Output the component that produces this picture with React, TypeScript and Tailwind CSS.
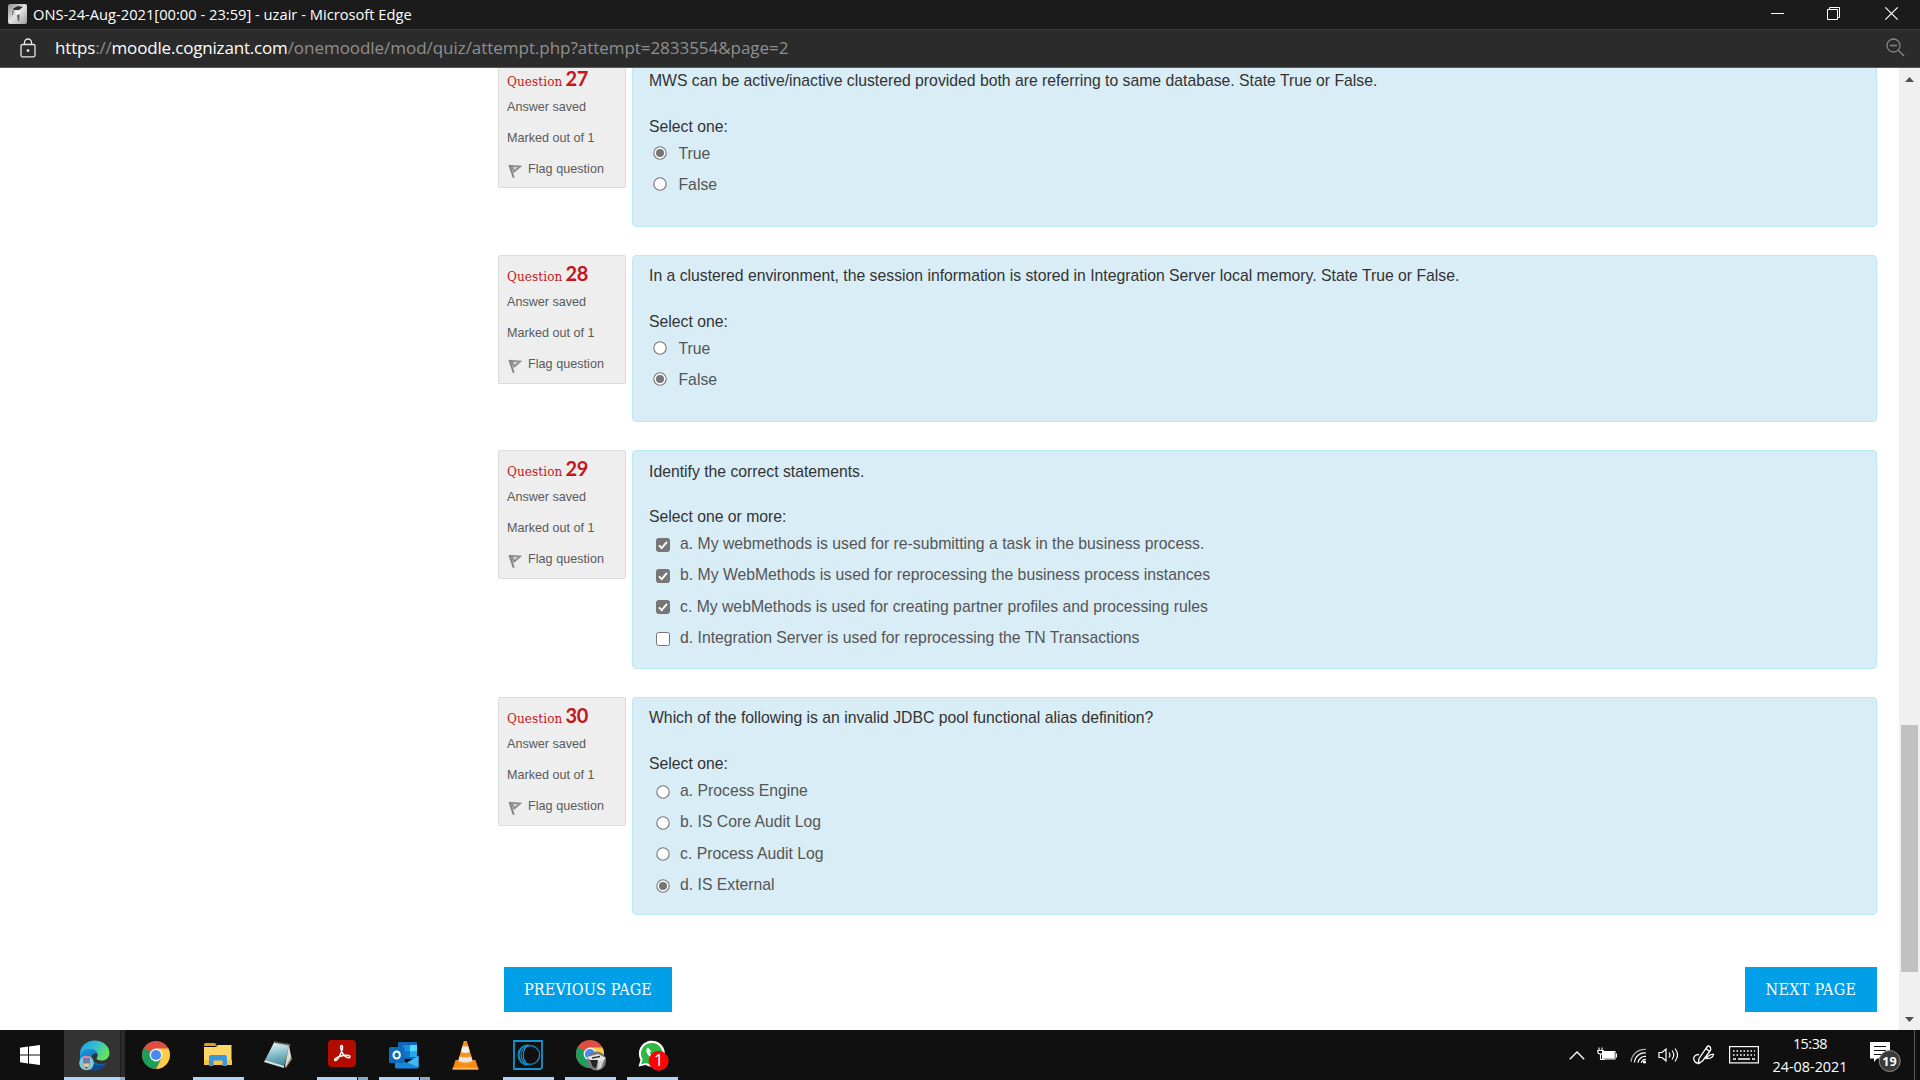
import React from 'react';

type Kind = 'bool' | 'radio' | 'check';

interface Quiz {
  n: number;
  text: string;
  prompt: string;
  kind: Kind;
  height: string;
  infoHeight: string;
  options: { label: string; on?: boolean }[];
}

const questions: Quiz[] = [
  {
    n: 27,
    text: 'MWS can be active/inactive clustered provided both are referring to same database. State True or False.',
    prompt: 'Select one:',
    kind: 'bool',
    height: 'h-[167px]',
    infoHeight: 'h-[128px]',
    options: [{ label: 'True', on: true }, { label: 'False' }],
  },
  {
    n: 28,
    text: 'In a clustered environment, the session information is stored in Integration Server local memory. State True or False.',
    prompt: 'Select one:',
    kind: 'bool',
    height: 'h-[167px]',
    infoHeight: 'h-[129px]',
    options: [{ label: 'True' }, { label: 'False', on: true }],
  },
  {
    n: 29,
    text: 'Identify the correct statements.',
    prompt: 'Select one or more:',
    kind: 'check',
    height: 'h-[219px]',
    infoHeight: 'h-[129px]',
    options: [
      { label: 'a. My webmethods is used for re-submitting a task in the business process.', on: true },
      { label: 'b. My WebMethods is used for reprocessing the business process instances', on: true },
      { label: 'c. My webMethods is used for creating partner profiles and processing rules', on: true },
      { label: 'd. Integration Server is used for reprocessing the TN Transactions' },
    ],
  },
  {
    n: 30,
    text: 'Which of the following is an invalid JDBC pool functional alias definition?',
    prompt: 'Select one:',
    kind: 'radio',
    height: 'h-[218px]',
    infoHeight: 'h-[129px]',
    options: [
      { label: 'a. Process Engine' },
      { label: 'b. IS Core Audit Log' },
      { label: 'c. Process Audit Log' },
      { label: 'd. IS External', on: true },
    ],
  },
];

function Radio({ on }: { on?: boolean }) {
  return (
    <svg width="14" height="14" viewBox="0 0 14 14" className="block shrink-0">
      <circle cx="7" cy="7" r="6.2" fill="#fff" stroke="#767676" strokeWidth="1.1" />
      {on && <circle cx="7" cy="7" r="4" fill="#767676" />}
    </svg>
  );
}

function Check({ on }: { on?: boolean }) {
  return (
    <svg width="14" height="14" viewBox="0 0 14 14" className="block shrink-0">
      <rect x="0.5" y="0.5" width="13" height="13" rx="2" fill={on ? '#767676' : '#fff'} stroke="#767676" />
      {on && <path d="M3 7.4 5.7 10.1 11 3.8" fill="none" stroke="#fff" strokeWidth="2" />}
    </svg>
  );
}

function Flag() {
  return (
    <svg width="14" height="15" viewBox="0 0 14 15" className="mt-[4px] block">
      <path d="M0.4 1.2 2.6 0.8 6.6 13.4 4.8 14Z" fill="#858585" />
      <path d="M3.4 1.8 12.2 2.4 6.2 7.6Z" fill="#d0d0d0" stroke="#8a8a8a" strokeWidth="1.6" />
    </svg>
  );
}

function InfoBox({ n, height }: { n: number; height: string }) {
  return (
    <div className={`${height} w-32 shrink-0 rounded-[2px] border border-[#dcdcdc] bg-[#eee] pl-2 text-[12.6px] text-[#5a5a5a]`}>
      <div className="flex h-[30.6px] items-baseline gap-[3px] pt-[5px] text-[#c4161c]">
        <span className="font-['DejaVu_Serif_Condensed','DejaVu_Serif',serif] text-[13.4px] leading-6 tracking-[0.1px]">Question</span>
        <span className="font-[Lato,sans-serif] text-[20px] font-bold leading-6 tracking-[-0.4px]">{n}</span>
      </div>
      <div className="h-[31px] leading-[31px]">Answer saved</div>
      <div className="h-[31px] leading-[31px]">Marked out of 1</div>
      <div className="flex h-[31px] items-center gap-[6px] pl-[1px] leading-[31px]">
        <Flag />
        <span className="tracking-[0.03px]">Flag question</span>
      </div>
    </div>
  );
}

function QuestionBlock({ q }: { q: Quiz }) {
  const bool = q.kind === 'bool';
  return (
    <section className="flex items-start gap-[6px]">
      <InfoBox n={q.n} height={q.infoHeight} />
      <div className={`${q.height} flex-1 rounded-[4px] border border-[#bce8f1] bg-[#d9edf7] pl-4 pt-[9px] text-[15.75px] text-[#333]`}>
        <p className={`h-[22px] leading-[22px] ${q.kind === 'check' ? 'mb-[23px] mt-px' : 'mb-[24px]'}`}>{q.text}</p>
        <p className="h-[22px] leading-[22px]">{q.prompt}</p>
        <ul className={bool ? 'pl-[3.5px]' : 'pl-[6.5px]'}>
          {q.options.map((o) => (
            <li key={o.label} className={`flex items-center text-[#555] ${bool ? 'h-[31.2px]' : 'h-[31.4px]'}`}>
              <span className={bool ? 'mr-3 -mt-[2px]' : 'mr-[10.5px] mt-[2px]'}>
                {q.kind === 'check' ? <Check on={o.on} /> : <Radio on={o.on} />}
              </span>
              <span>{o.label}</span>
            </li>
          ))}
        </ul>
      </div>
    </section>
  );
}

function TitleBar() {
  return (
    <header className="flex h-[29px] items-center bg-[#1b1b1b] font-['Open_Sans',sans-serif] text-[14.7px] text-white">
      <svg width="19" height="20" viewBox="0 0 19 20" className="ml-2 mr-[6px] -mt-px">
        <defs>
          <linearGradient id="fav" x1="0" y1="0" x2="1" y2="1">
            <stop offset="0" stopColor="#8d8d8d" />
            <stop offset="0.5" stopColor="#e4e4e4" />
            <stop offset="1" stopColor="#9a9a9a" />
          </linearGradient>
        </defs>
        <rect width="19" height="20" rx="2" fill="url(#fav)" />
        <path d="M5 4.5 10 2 15 3 11 6 6 6Z" fill="#2f2f2f" />
        <path d="M5 6 4.5 11" stroke="#666" strokeWidth="1" />
        <path d="M9 11 11.5 10.500 11.2 17 10 17Z" fill="#5c5c5c" />
        <path d="M7 6.500h5v3.500H8Z" fill="#f2f2f2" />
      </svg>
      <span className="-mt-px">ONS-24-Aug-2021[00:00 - 23:59] - uzair - Microsoft Edge</span>
      <div className="ml-auto flex items-center">
        <svg width="149" height="29" viewBox="0 0 149 29" fill="none" stroke="#fff">
          <path d="M0 13.5h13" />
          <path d="M56.5 9.5h10v10h-10zM58.5 9.5v-2h10v10h-2" />
          <path d="m114.3 7.3 12.4 12.4m0-12.4-12.4 12.4" strokeWidth="1.2" />
        </svg>
      </div>
    </header>
  );
}

function AddressBar() {
  return (
    <div className="flex h-[39px] items-center border-b border-t border-b-[#5c5858] border-t-[#3c3c3c] bg-[#2b2b2b] font-['Open_Sans',sans-serif] text-[17px] text-[#8f8f8f]">
      <svg width="16" height="20" viewBox="0 0 16 20" fill="none" stroke="#e8e8e8" strokeWidth="1.3" className="mb-[2px] ml-[19.5px] mr-[19.5px]">
        <rect x="1" y="6.5" width="14" height="12.3" rx="1.5" />
        <path d="M4.5 6.5V4.5a3.5 3.5 0 0 1 7 0v2" />
        <circle cx="8" cy="12.6" r="0.8" fill="#fff" />
      </svg>
      <p className="mb-px whitespace-nowrap">
        <span className="tracking-[-0.18px] text-white">https</span>
        <span className="tracking-[-0.18px]">://</span>
        <span className="tracking-[-0.18px] text-white">moodle.cognizant.com</span>
        <span className="tracking-[-0.04px]">/onemoodle/mod/quiz/attempt.php?attempt=2833554&amp;page=2</span>
      </p>
      <svg width="19" height="19" viewBox="0 0 19 19" fill="none" stroke="#858585" strokeWidth="1.3" className="mb-[2px] ml-auto mr-[15px]">
        <circle cx="7.5" cy="7.5" r="6.5" />
        <path d="m12.2 12.2 5.8 5.8M4 7.5h7" />
      </svg>
    </div>
  );
}

function Scrollbar() {
  return (
    <div className="flex w-[21px] shrink-0 flex-col items-center bg-[#f0f0f0]">
      <svg width="9" height="5" viewBox="0 0 9 5" className="mt-[9px] block"><path d="M0 5 4.5 0 9 5Z" fill="#505050" /></svg>
      <div className="mt-[643px] h-[247px] w-[17px] bg-[#c1c1c1]" />
      <svg width="9" height="5" viewBox="0 0 9 5" className="mt-[45px] block"><path d="M0 0 4.5 5 9 0Z" fill="#505050" /></svg>
    </div>
  );
}

function ChromeMark() {
  return (
    <g>
      <circle cx="14" cy="14" r="14" fill="#dd4f43" />
      <path d="M14 14 1.9 7A14 14 0 0 0 14 28L20 17.5Z" fill="#1a9f5c" />
      <path d="M14 7.6H26.4A14 14 0 0 1 14 28L19.6 17.2Z" fill="#fdcd48" />
      <circle cx="14" cy="14" r="6.4" fill="#f3f3f3" />
      <circle cx="14" cy="14" r="5.1" fill="#4a8af0" />
    </g>
  );
}

const icons: Record<string, React.ReactNode> = {
  edge: (
    <svg width="31" height="31" viewBox="0 0 31 31">
      <defs>
        <linearGradient id="e1" x1="0" y1="0" x2="1" y2="0.5">
          <stop offset="0" stopColor="#1c9be0" />
          <stop offset="0.55" stopColor="#35c1d0" />
          <stop offset="1" stopColor="#66e35a" />
        </linearGradient>
        <linearGradient id="e2" x1="0" y1="0" x2="0.6" y2="1">
          <stop offset="0" stopColor="#1b9be2" />
          <stop offset="1" stopColor="#0c59a4" />
        </linearGradient>
      </defs>
      <path d="M.8 15.500C2 10.500 6 8.800 10.500 8.800c4 0 7 2.200 8 5-4.500-1-6.500 2-5.500 5 1.200 4 7 6.500 14.500 4.200C24 28.500 20 30.500 15.500 30.500 7 30.500 .5 23.500 .8 15.500Z" fill="url(#e2)" />
      <path d="M1 14C1 6 7.500 .5 15.500 .5 24 .5 30.500 6 30.500 13c0 5-4 7.500-8 7.500-3 0-5-1-5-2 0-.8 1.200-1.500 1.200-3.500 0-3-3-6-7.500-6C6 9 2 11.500 1 16Z" fill="url(#e1)" />
      <path d="M12 17c-1 6 5 10.500 14.500 7.500C24 28.500 19 31 15 30.300 10 28 8 21 12 17Z" fill="#124a8a" />
      <circle cx="7.500" cy="23" r="7.300" fill="#7ccbd6" />
      <path d="M4 17h7v7l-3.500 5L4 24Z" fill="#7d75a8" />
      <path d="M4 23.500h7L7.500 29Z" fill="#f0c58f" />
      <path d="m6.400 27 1.100 2 1.100-2Z" fill="#333" />
      <path d="M4 16h7v2H4Z" fill="#d88ba0" />
    </svg>
  ),
  chrome: <svg width="28" height="28" viewBox="0 0 28 28" className="-mt-px"><ChromeMark /></svg>,
  explorer: (
    <svg width="28" height="24" viewBox="0 0 28 24" className="-mt-px">
      <path d="M0 1.500 1 0H11l2 3H0Z" fill="#e19f0b" />
      <path d="M0 4H12l2-2H27.500V22H0Z" fill="#ffd766" />
      <path d="M0 17H28v5H0Z" fill="#f5c445" />
      <path d="M5 23V14q0-2 2-2H21q2 0 2 2v9H18.500V17.500h-9V23Z" fill="#3b96dc" />
    </svg>
  ),
  notepad: (
    <svg width="29" height="28" viewBox="0 0 29 28" className="-mt-px -ml-[3px]">
      <defs>
        <linearGradient id="np" x1="0.3" y1="0" x2="0.5" y2="1">
          <stop offset="0" stopColor="#e9f4f6" />
          <stop offset="0.45" stopColor="#8fc3cf" />
          <stop offset="1" stopColor="#3f8597" />
        </linearGradient>
      </defs>
      <path d="M24 3 28 18 22 27 21 24Z" fill="#a58a55" />
      <path d="M25 4 27 16 21 27Z" fill="#d9dcdc" />
      <path d="M10 1.500 25 4 20 26 1 19Z" fill="url(#np)" />
      <path d="M1 19 20 25v2L0 21Z" fill="#d9e3e5" />
      <path d="m10 1 16 3" stroke="#777" strokeWidth="2" strokeDasharray="1.500 1" />
    </svg>
  ),
  adobe: (
    <svg width="28" height="27" viewBox="0 0 28 27" className="-mt-[3px]">
      <rect width="28" height="27" rx="4" fill="#b30b00" />
      <path d="M13.500 5.500c1.800 0 1.200 4-1 8.500-1.500 3.500-3.500 6.500-5 6.500-2 0-.5-3 5-4.300 4.500-1.200 9.500-1.300 9.500.6 0 2-4.500.8-7-2.800-2-3-3.200-8.500-1.500-8.500Z" fill="none" stroke="#fff" strokeWidth="1.500" />
    </svg>
  ),
  outlook: (
    <svg width="30" height="27" viewBox="0 0 30 27" className="-ml-px">
      <rect x="9" y="0" width="19" height="17" rx="1" fill="#1066b5" />
      <path d="M14 3h7v6h-7z" fill="#1b90df" /><path d="M21 3h7v6h-7z" fill="#4fd9ff" /><path d="M14 9h7v6h-7z" fill="#1478c8" /><path d="M21 9h7v6h-7z" fill="#28a8ea" />
      <path d="M6 13.500 18 21 29.500 13.500V25q0 1.500-1.500 1.500H7.500Q6 26.500 6 25Z" fill="#1a86d9" />
      <path d="M29.500 14v11L18 20.500Z" fill="#46b8f0" />
      <rect x="0" y="5" width="15.500" height="16" rx="1.500" fill="#0f6cbd" />
      <ellipse cx="7.700" cy="13" rx="3.200" ry="3.600" fill="none" stroke="#fff" strokeWidth="2" />
    </svg>
  ),
  vlc: (
    <svg width="27" height="29" viewBox="0 0 27 29" className="-ml-px">
      <path d="M3.500 19h20L26.500 28.500H.5Z" fill="#f58a0c" />
      <path d="M.8 26.500H26.200L26.500 28.500H.5Z" fill="#ffb15c" />
      <path d="M11.800 0h3L21.500 22q-8 4-16 0Z" fill="#f7931e" />
      <path d="M10.300 5.500h6L17.700 11q-4.200 2-8.700 0Z" fill="#f0f0f0" />
      <path d="M7.600 15.500q5.500 2.200 11.500 0l1.300 4.500q-7 3-14 0Z" fill="#e6e6e6" />
    </svg>
  ),
  moon: (
    <svg width="30" height="30" viewBox="0 0 30 30" fill="none" stroke="#1295d0">
      <path d="M1 1H29V27.500L27.500 29H1Z" strokeWidth="1.800" />
      <circle cx="17.300" cy="15" r="9.300" strokeWidth="1.200" />
      <path d="M15 5A10 10 0 1 0 15 25 13 13 0 0 1 15 5Z" strokeWidth="1.100" />
      <path d="M13 5.500A10 10 0 0 0 13 24.500" strokeWidth="1.100" />
    </svg>
  ),
  profile: (
    <svg width="31" height="31" viewBox="0 0 31 31" className="ml-[3px] mt-px">
      <ChromeMark />
      <circle cx="20.500" cy="21" r="9.500" fill="#777" />
      <path d="M11 17 22 14 30 18 25 23 14 20Z" fill="#e4e4e4" />
      <path d="M14 20 22 20 20 28 17 27Z" fill="#222" />
      <path d="M22 22 28 20 25 28 21 30Z" fill="#cfcfcf" />
      <path d="m16 18 8-1.500M18 23l3 1" stroke="#333" strokeWidth="1.300" />
    </svg>
  ),
  whatsapp: (
    <svg width="31" height="31" viewBox="0 0 31 31" className="ml-[3px] mt-px">
      <path d="M.5 26.500 2.500 20A13 13 0 1 1 7.500 25Z" fill="#fff" />
      <path d="M3 24.300 4.600 19.500A10.800 10.800 0 1 1 8.200 23Z" fill="#2fb843" />
      <path d="M10 7.500c-3 2-1.500 6 1.500 9s6.500 4.500 8.500 2l-2-3-2 1.300c-2-.8-3.500-2.500-4.300-4.200L13 11Z" fill="#fff" />
      <circle cx="20.700" cy="20.700" r="10" fill="#fa0505" />
      <text x="20.700" y="26.300" textAnchor="middle" fontFamily="Open Sans, sans-serif" fontSize="16.500" fill="#fff">1</text>
    </svg>
  ),
};

function Underline({ split, full }: { split?: boolean; full?: boolean }) {
  return (
    <div className={`flex h-[3px] shrink-0 ${full ? 'w-[61px]' : 'w-[51px]'}`}>
      <div className="flex-1 bg-[#abd5fa]" />
      {split && <div className="w-[11px] border-l border-[#101010] bg-[#86a9c9]" />}
      {full && <div className="w-[5px] bg-[#8db0d0]" />}
    </div>
  );
}

const tasks = [
  { id: 'edge', bar: 'active' },
  { id: 'chrome', bar: '' },
  { id: 'explorer', bar: 'plain' },
  { id: 'notepad', bar: '' },
  { id: 'adobe', bar: 'split' },
  { id: 'outlook', bar: 'split' },
  { id: 'vlc', bar: '' },
  { id: 'moon', bar: 'plain' },
  { id: 'profile', bar: 'plain' },
  { id: 'whatsapp', bar: 'plain' },
];

function Tray() {
  return (
    <div className="ml-auto flex h-full items-center">
      <svg width="16" height="9" viewBox="0 0 16 9" fill="none" stroke="#fff" strokeWidth="1.300" className="mr-3"><path d="m.8 8.300 7.200-7.300 7.200 7.300" /></svg>
      <svg width="21" height="15" viewBox="0 0 21 15" fill="none" stroke="#fff" className="mr-3 -mt-[2px]">
        <rect x="5.500" y="4.500" width="12.500" height="7.500" />
        <rect x="7" y="6" width="9.500" height="4.500" fill="#fff" stroke="none" />
        <rect x="6" y="5" width="11.500" height="6.500" fill="#fff" stroke="none" />
        <path d="M19.500 6.500v4M2 .5V3M5 .5V3M.8 3.500h5.500v1.500q0 2-2.700 2t-2.800-2ZM3.500 7v5.500h4" strokeWidth="1.100" />
      </svg>
      <svg width="17" height="17" viewBox="0 0 17 17" fill="none" stroke="#fff" strokeWidth="1.200" className="mr-[11px]">
        <path d="M1 15A13.500 13.500 0 0 1 16 2.500" stroke="#aaa" /><path d="M4.500 15.500A10 10 0 0 1 16 6" /><path d="M8 15.800A7 7 0 0 1 16 9.500" /><path d="M11.300 16A4 4 0 0 1 16 12.500" /><circle cx="14.500" cy="15" r="1" fill="#fff" />
      </svg>
      <svg width="22" height="16" viewBox="0 0 22 16" fill="none" stroke="#fff" strokeWidth="1.200" className="mr-[13px]">
        <path d="M1 5.500h3L8 2v12l-4-3.500H1ZM11 5.500q2 2.500 0 5M14 3.500q3.500 4.500 0 9M17 1.500q5 6.500 0 13" />
      </svg>
      <svg width="22" height="20" viewBox="0 0 22 20" fill="none" stroke="#fff" strokeWidth="1.300" className="mr-[14px]">
        <path d="M6 13.500 14 2q1.500-2 3 0t0 4L9.500 16 5.500 18.500ZM13 3.500l3.500 3M6 9.500C2 9.500 0 12 1 15s4 3.500 6.500 3M12.500 14c3-4 5-5 8-4.500-.5 3-3.500 4-6.500 4" />
      </svg>
      <svg width="30" height="18" viewBox="0 0 30 18" fill="none" stroke="#fff" className="mr-[12px]">
        <rect x=".6" y=".6" width="28.800" height="16.300" strokeWidth="1.200" />
        <path d="M4 5h22M4 9h22" strokeWidth="1.600" strokeDasharray="1.600 1.900" /><path d="M4 13h3m2 0h12m2 0h3" strokeWidth="1.300" />
      </svg>
      <div className="flex w-[78px] flex-col items-center pb-px font-['Open_Sans',sans-serif] text-[14.400px] leading-[23px] text-white">
        <span className="tracking-[-0.5px]">15:38</span>
        <span>24-08-2021</span>
      </div>
      <svg width="32" height="34" viewBox="0 0 32 34" className="ml-[21px] mr-[12px]">
        <path d="M0 4H20V20.500H7L4 24V20.500H0Z" fill="#fff" />
        <path d="M4 8.500h12M4 12.500h12M4 16.500h8" stroke="#111" strokeWidth="1.200" />
        <circle cx="19.700" cy="23" r="10.500" fill="#3a3a3a" stroke="#8b8b8b" />
        <text x="19.500" y="27.500" textAnchor="middle" fontFamily="Open Sans, sans-serif" fontSize="12.500" fontWeight="700" fill="#fff">19</text>
      </svg>
      <div className="mr-[5px] h-full w-px bg-[#5a5a5a]" />
    </div>
  );
}

function Taskbar() {
  return (
    <footer className="flex h-[50px] items-stretch bg-[#101010]">
      <div className="flex w-16 items-center">
        <svg width="20" height="20" viewBox="0 0 20 20" fill="#fff" className="ml-5">
          <path d="M0 2.800 8 1.600V9.500H0ZM9 1.400 20 0V9.500H9ZM0 10.500H8v7.900L0 17.200ZM9 10.500H20V20L9 18.500Z" />
        </svg>
      </div>
      {tasks.map((t) =>
        t.bar === 'active' ? (
          <div key={t.id} className="flex w-[61px] flex-col bg-[linear-gradient(90deg,#333_56px,#1c1c1c_56px,#1c1c1c_57px,#2a2a2a_57px)]">
            <div className="flex h-[47px] items-center pl-[15px] pt-[3px]">{icons[t.id]}</div>
            <Underline full />
          </div>
        ) : (
          <div key={t.id} className="flex w-[62px] flex-col items-center">
            <div className="flex h-[47px] w-full items-center justify-center pt-[3px]">{icons[t.id]}</div>
            {t.bar !== '' && <Underline split={t.bar === 'split'} />}
          </div>
        ),
      )}
      <Tray />
    </footer>
  );
}

const pageButton =
  "flex h-[45px] items-center justify-center bg-[#009fe8] font-['DejaVu_Serif_Condensed','DejaVu_Serif',serif] text-[16px] text-white";

export default function App() {
  return (
    <div className="flex h-[1080px] w-[1920px] flex-col overflow-hidden bg-white font-['Liberation_Sans',Arial,sans-serif]">
      <TitleBar />
      <AddressBar />
      <div className="flex h-[962px] overflow-hidden">
        <main className="-mt-2 ml-[498px] w-[1379px]">
          <div className="flex flex-col gap-7">
            {questions.map((q) => (
              <QuestionBlock key={q.n} q={q} />
            ))}
          </div>
          <div className="mt-[52px] flex justify-between pl-[6px]">
            <button className={`${pageButton} w-[168px] tracking-[0.15px]`}>PREVIOUS PAGE</button>
            <button className={`${pageButton} w-[132px] tracking-[0.3px]`}>NEXT PAGE</button>
          </div>
        </main>
        <div className="w-[22px]" />
        <Scrollbar />
      </div>
      <Taskbar />
    </div>
  );
}
